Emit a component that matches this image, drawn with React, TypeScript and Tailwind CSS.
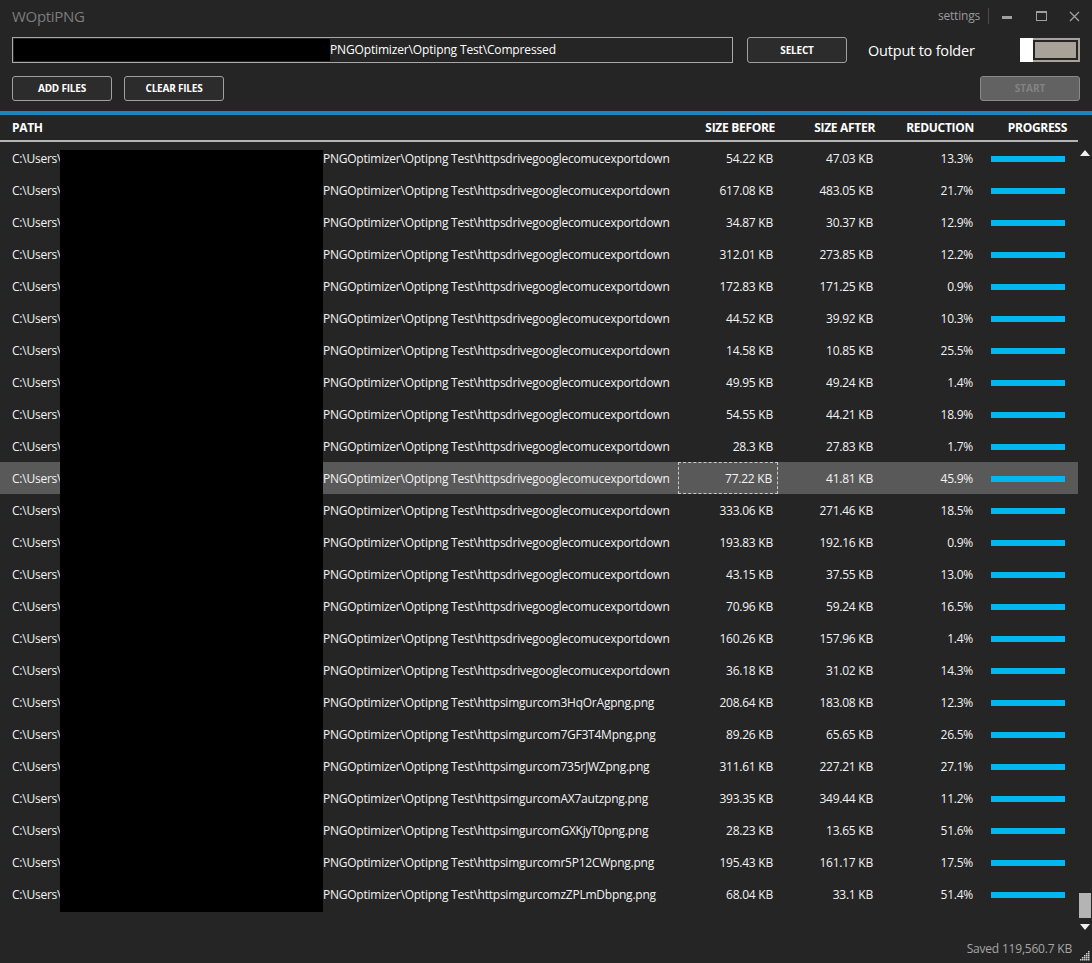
import React from 'react'

interface Row {
  file: string
  before: string
  after: string
  reduction: string
}

const DRIVE = 'httpsdrivegooglecomucexportdown'

const rows: Row[] = [
  { file: DRIVE, before: '54.22 KB', after: '47.03 KB', reduction: '13.3%' },
  { file: DRIVE, before: '617.08 KB', after: '483.05 KB', reduction: '21.7%' },
  { file: DRIVE, before: '34.87 KB', after: '30.37 KB', reduction: '12.9%' },
  { file: DRIVE, before: '312.01 KB', after: '273.85 KB', reduction: '12.2%' },
  { file: DRIVE, before: '172.83 KB', after: '171.25 KB', reduction: '0.9%' },
  { file: DRIVE, before: '44.52 KB', after: '39.92 KB', reduction: '10.3%' },
  { file: DRIVE, before: '14.58 KB', after: '10.85 KB', reduction: '25.5%' },
  { file: DRIVE, before: '49.95 KB', after: '49.24 KB', reduction: '1.4%' },
  { file: DRIVE, before: '54.55 KB', after: '44.21 KB', reduction: '18.9%' },
  { file: DRIVE, before: '28.3 KB', after: '27.83 KB', reduction: '1.7%' },
  { file: DRIVE, before: '77.22 KB', after: '41.81 KB', reduction: '45.9%' },
  { file: DRIVE, before: '333.06 KB', after: '271.46 KB', reduction: '18.5%' },
  { file: DRIVE, before: '193.83 KB', after: '192.16 KB', reduction: '0.9%' },
  { file: DRIVE, before: '43.15 KB', after: '37.55 KB', reduction: '13.0%' },
  { file: DRIVE, before: '70.96 KB', after: '59.24 KB', reduction: '16.5%' },
  { file: DRIVE, before: '160.26 KB', after: '157.96 KB', reduction: '1.4%' },
  { file: DRIVE, before: '36.18 KB', after: '31.02 KB', reduction: '14.3%' },
  { file: 'httpsimgurcom3HqOrAgpng.png', before: '208.64 KB', after: '183.08 KB', reduction: '12.3%' },
  { file: 'httpsimgurcom7GF3T4Mpng.png', before: '89.26 KB', after: '65.65 KB', reduction: '26.5%' },
  { file: 'httpsimgurcom735rJWZpng.png', before: '311.61 KB', after: '227.21 KB', reduction: '27.1%' },
  { file: 'httpsimgurcomAX7autzpng.png', before: '393.35 KB', after: '349.44 KB', reduction: '11.2%' },
  { file: 'httpsimgurcomGXKjyT0png.png', before: '28.23 KB', after: '13.65 KB', reduction: '51.6%' },
  { file: 'httpsimgurcomr5P12CWpng.png', before: '195.43 KB', after: '161.17 KB', reduction: '17.5%' },
  { file: 'httpsimgurcomzZPLmDbpng.png', before: '68.04 KB', after: '33.1 KB', reduction: '51.4%' },
]

const SELECTED = 10

// resize grip dots, bottom right corner
const GRIP = [
  [8, 0],
  [6, 2],
  [8, 2],
  [4, 4],
  [6, 4],
  [8, 4],
  [2, 6],
  [4, 6],
  [6, 6],
  [8, 6],
  [0, 8],
  [2, 8],
  [4, 8],
  [6, 8],
  [8, 8],
]

function Button({ label, className = '' }: { label: string; className?: string }) {
  return (
    <button
      className={`h-full w-[100px] rounded-[3px] border border-[#a0a0a0] bg-[#2c2c2c] text-[10px] font-bold tracking-[-0.2px] text-white ${className}`}
    >
      {label}
    </button>
  )
}

export default function App() {
  return (
    <div
      className="relative flex h-[963px] w-[1092px] flex-col overflow-hidden bg-[#252525] text-white"
      style={{ fontFamily: '"Segoe UI", "Open Sans", "Noto Sans", sans-serif' }}
    >
      {/* Title bar */}
      <div className="flex h-[32px] items-center pl-[12px]">
        <span className="text-[15px] tracking-[-0.3px] text-[#7c7c7c]">WOptiPNG</span>
        <div className="ml-auto flex items-center">
          <span className="text-[12px] tracking-[-0.2px] text-[#9a9a9a]">settings</span>
          <div className="ml-[8px] h-[16px] w-px bg-[#4d4d4d]" />
          <div className="ml-[13px] mt-[3px] h-[3px] w-[10px] bg-[#a0a0a0]" />
          <div className="ml-[24px] h-[10px] w-[11px] border border-t-2 border-[#a0a0a0]" />
          <svg className="ml-[22px] mr-[12px]" width="11" height="11" viewBox="0 0 11 11">
            <path d="M1 1 L10 10 M10 1 L1 10" stroke="#a0a0a0" strokeWidth="1.3" />
          </svg>
        </div>
      </div>

      {/* Folder row */}
      <div className="mt-[5px] flex h-[26px] items-center px-[12px]">
        <div className="relative flex h-full w-[721px] items-center border border-[#a8a8a8]">
          <div className="ml-[1px] h-[22px] w-[316px] bg-black" />
          <span className="text-[12px] tracking-[-0.15px] text-white">PNGOptimizer\Optipng Test\Compressed</span>
        </div>
        <Button label="SELECT" className="ml-[14px]" />
        <span className="ml-[21px] pt-[2px] text-[14.5px] tracking-[-0.2px] text-white">Output to folder</span>
        <div className="ml-auto flex h-[24px] w-[60px] border-2 border-[#a8a298]">
          <div className="-ml-[2px] -my-[2px] h-[24px] w-[13px] bg-white" />
          <div className="flex-1 border-2 border-[#252525] bg-[#a8a298]" />
        </div>
      </div>

      {/* Action row */}
      <div className="mt-[13px] flex h-[25px] items-center gap-[12px] px-[12px]">
        <Button label="ADD FILES" />
        <Button label="CLEAR FILES" />
        <button className="ml-auto h-full w-[100px] rounded-[3px] border border-[#8a8a8a] bg-[#626262] text-[10px] font-bold text-[#838383]">
          START
        </button>
      </div>

      <div className="mt-[10px] h-[4px] bg-[#1a86bd]" />

      {/* Table */}
      <div className="relative flex flex-1">
        <div className="w-[1078px]">
          <div className="flex h-[27px] items-center border-b-2 border-[#b4b4b4] pt-[1px] text-[12px] font-bold tracking-[-0.3px]">
            <div className="w-[678px] pl-[12px]">PATH</div>
            <div className="w-[100px] pr-[3px] text-right">SIZE BEFORE</div>
            <div className="w-[100px] pr-[3px] text-right">SIZE AFTER</div>
            <div className="w-[100px] pr-[4px] text-right">REDUCTION</div>
            <div className="w-[100px] pr-[11px] text-right">PROGRESS</div>
          </div>
          {rows.map((r, i) => (
            <div
              key={i}
              className={`flex h-[32px] items-center pt-[2px] text-[12px] tracking-[-0.24px] text-[#f2f2f2] ${i === SELECTED ? 'bg-[#595959]' : ''}`}
            >
              <div className="flex w-[678px] pl-[12px]">
                <span className="w-[311px]">C:\Users\</span>
                <span className="whitespace-nowrap">PNGOptimizer\Optipng Test\{r.file}</span>
              </div>
              <div
                className={`-mt-[2px] flex h-[32px] w-[100px] items-center justify-end pr-[5px] pt-[2px] ${i === SELECTED ? 'border border-dashed border-[#c8c8c8]' : ''}`}
              >
                {r.before}
              </div>
              <div className="w-[100px] pr-[5px] text-right">{r.after}</div>
              <div className="w-[100px] pr-[5px] text-right">{r.reduction}</div>
              <div className="flex w-[100px] justify-start pl-[13px]">
                <div className="h-[6px] w-[74px] bg-[#00b7f1]" />
              </div>
            </div>
          ))}
        </div>

        {/* Redaction overlay */}
        <div className="absolute left-[60px] top-[35px] h-[762px] w-[263px] bg-black" />

        {/* Scrollbar */}
        <div className="relative flex-1">
          <svg className="absolute left-[2px] top-[35px]" width="10" height="6" viewBox="0 0 10 6">
            <path d="M5 0 L10 6 L0 6 Z" fill="#f0f0f0" />
          </svg>
          <div className="absolute left-[1px] top-[778px] h-[25px] w-[12px] bg-[#b4b4b4]" />
          <svg className="absolute left-[2px] top-[809px]" width="10" height="6" viewBox="0 0 10 6">
            <path d="M0 0 L10 0 L5 6 Z" fill="#f0f0f0" />
          </svg>
        </div>
      </div>

      {/* Footer */}
      <div className="flex h-[28px] items-center justify-end pr-[20px]">
        <span className="text-[12px] tracking-[-0.2px] text-[#a6a6a6]">Saved 119,560.7 KB</span>
      </div>
      <svg className="absolute bottom-[2px] right-[2px]" width="10" height="10" viewBox="0 0 10 10">
        {GRIP.map(([x, y], k) => (
          <rect key={k} x={x} y={y} width="1.5" height="1.5" fill="#d0d0d0" />
        ))}
      </svg>
    </div>
  )
}
